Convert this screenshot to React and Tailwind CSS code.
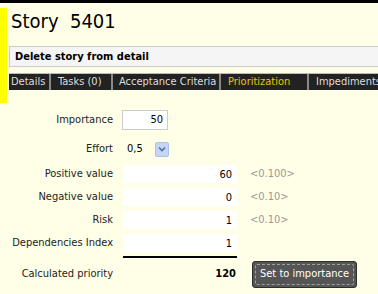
import React from 'react';

const font = { fontFamily: '"DejaVu Sans Condensed", "DejaVu Sans", Tahoma, sans-serif' };

const tabs = [
  { label: 'Details', w: 'w-[40px]', pl: 'pl-[2px]' },
  { label: 'Tasks (0)', w: 'w-[60px]', pl: 'pl-[7px]' },
  { label: 'Acceptance Criteria', w: 'w-[106px]', pl: 'pl-[6px]' },
  { label: 'Prioritization', w: 'w-[86px]', pl: 'pl-[7px]', active: true },
  { label: 'Impediments', w: 'w-[80px]', pl: 'pl-[7px]' },
];

function Row({ label, children, className }) {
  return (
    <div className={`flex items-center ${className}`}>
      <div className="w-[113px] text-right text-[11px] text-[#222] shrink-0">{label}</div>
      <div className="ml-[10px] flex items-center">{children}</div>
    </div>
  );
}

function ValueInput({ value, hint }) {
  return (
    <>
      <div className="w-[114px] h-[18px] bg-white text-right pr-[5px] pt-[2px] text-[11px] text-black leading-[16px]">
        {value}
      </div>
      {hint && <span className="ml-[13px] text-[11px] text-[#999]">{hint}</span>}
    </>
  );
}

export default function App() {
  return (
    <div className="w-[378px] h-[294px] overflow-hidden bg-[#ffffe7]" style={font}>
      <div className="h-[3px] bg-black" />
      <div className="flex mt-[5px]">
        <div className="w-[7px] h-[95px] bg-[#ffff00] shrink-0" />
        <div className="flex-1 ml-[2px]">
          <div className="h-[38px] pl-[2px] pt-[1px] text-[20px] leading-[24px] text-black">
            Story&nbsp;&nbsp;5401
          </div>
          <div className="h-[21px] bg-[#f5f5f5] border border-r-0 border-[#cccccc] pl-[5px] text-[11px] font-bold leading-[19px] text-black">
            Delete story from detail
          </div>
          <div className="mt-[6px] h-[17px] bg-[#222222] border-t border-[#bbbbbb] flex text-[11px] leading-[16px] whitespace-nowrap">
            {tabs.map((t, i) => (
              <div key={t.label} className="flex shrink-0">
                {i > 0 && <div className="w-[2px] bg-[#8a8a8a]" />}
                <div className={`${t.w} ${t.pl} ${t.active ? 'text-[#e8c800]' : 'text-[#dddddd]'}`}>
                  {t.label}
                </div>
              </div>
            ))}
          </div>
        </div>
      </div>

      <div className="mt-[7px]">
        <Row label="Importance">
          <div className="-ml-[1px] w-[46px] h-[20px] border border-[#cccccc] bg-white text-right pr-[4px] text-[11px] leading-[18px] text-black">
            50
          </div>
        </Row>
        <Row label="Effort" className="mt-[11px] h-[16px]">
          <span className="ml-[4px] text-[11px] text-black">0,5</span>
          <div className="ml-[12px] w-[14px] h-[15px] rounded-[2px] bg-[#c5d5f4] border border-[#aec0e8] flex items-center justify-center">
            <svg width="8" height="6" viewBox="0 0 8 6">
              <path d="M1 1.5 L4 4.5 L7 1.5" fill="none" stroke="#4d6db5" strokeWidth="1.6" />
            </svg>
          </div>
        </Row>
        <Row label="Positive value" className="mt-[8px]">
          <ValueInput value="60" hint="<0.100>" />
        </Row>
        <Row label="Negative value" className="mt-[5px]">
          <ValueInput value="0" hint="<0.10>" />
        </Row>
        <Row label="Risk" className="mt-[5px]">
          <ValueInput value="1" hint="<0.10>" />
        </Row>
        <Row label="Dependencies Index" className="mt-[5px]">
          <ValueInput value="1" />
        </Row>
        <div className="ml-[123px] mt-[4px] w-[114px] h-[2px] bg-black" />
        <Row label="Calculated priority" className="mt-[3px]">
          <div className="w-[114px] text-right pr-[1px] text-[11px] font-bold text-black">120</div>
          <button className="ml-[15px] w-[105px] h-[27px] rounded-[3px] bg-[#555555] border border-[#2e2e2e] p-[2px]">
            <div className="w-full h-full border border-dashed border-[#a0a0a0] rounded-[2px] flex items-center justify-center text-white text-[11px]">
              Set to importance
            </div>
          </button>
        </Row>
      </div>
    </div>
  );
}
